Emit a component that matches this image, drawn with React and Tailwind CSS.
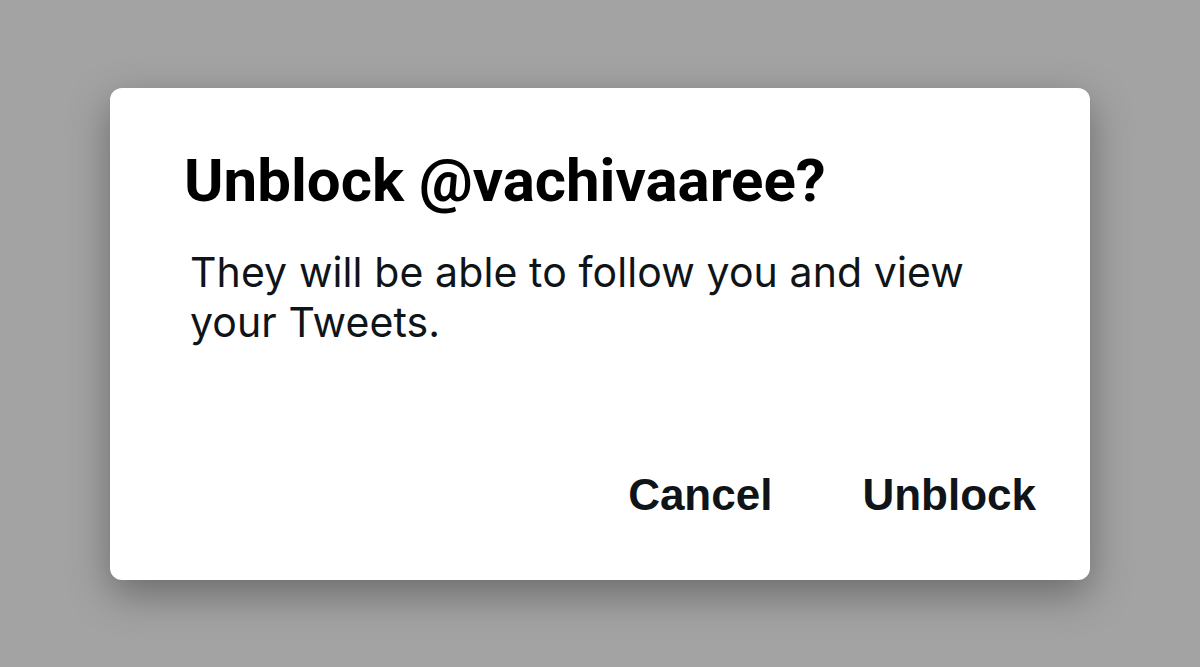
export default function App() {
  return (
    <div className="w-[1200px] h-[667px] bg-[#a3a3a3] flex items-start justify-center pt-[88px] overflow-hidden">
      <div className="w-[980px] h-[492px] bg-white rounded-[12px] shadow-[0_14px_40px_rgba(0,0,0,0.35)] flex flex-col pl-[74px] pr-[54px] pt-[58px]">
        <h1 className="font-['Roboto',sans-serif] text-[60px] leading-[70px] font-bold text-black tracking-[0px]">
          Unblock @vachivaaree?
        </h1>
        <p className="font-['Inter',sans-serif] mt-[31px] ml-[6px] text-[41px] leading-[50px] text-[#0f1419] w-[820px] tracking-[0.1px]">
          They will be able to follow you and view your Tweets.
        </p>
        <div className="font-['Liberation_Sans',Arial,sans-serif] mt-auto mb-[52px] flex justify-end gap-[90px] text-[44px] font-bold text-[#0f1419]">
          <span>Cancel</span>
          <span>Unblock</span>
        </div>
      </div>
    </div>
  );
}
